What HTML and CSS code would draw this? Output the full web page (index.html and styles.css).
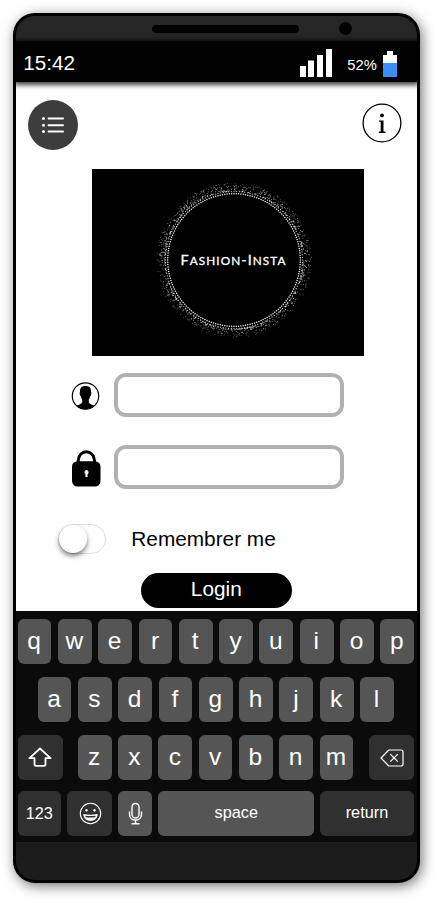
FILE: index.html
```html
<!DOCTYPE html>
<html lang="en">
<head>
<meta charset="utf-8">
<title>Fashion-Insta</title>
<link rel="stylesheet" href="styles.css">
</head>
<body>
<main class="phone">
  <div class="bezel-top"><span class="speaker"></span><span class="camera"></span></div>
  <header class="status">
    <span class="time">15:42</span>
    <svg class="signal" width="32" height="28" viewBox="0 0 32 28" fill="#fff"><path d="M0 17h6v11H0zM8 11.500h6V28H8zM17 6h6v22h-6zM26 0h6v28h-6z"/></svg>
    <span class="percent">52%</span>
    <svg class="battery" width="14" height="26" viewBox="0 0 14 26"><path fill="#fff" d="M4 0h6v4h4v8H0V4h4z"/><path fill="#3b8eff" d="M0 12h14v14H0z"/></svg>
  </header>
  <section class="screen">
    <div class="toolbar">
      <button class="menu" aria-label="Menu">
        <svg width="24" height="18" viewBox="0 0 24 18" fill="none" stroke="#fff" stroke-width="2" stroke-linecap="round"><path d="M7.500 2.500H22M7.500 9.200H22M7.500 15.600H22"/><path stroke-width="3" d="M2.500 2.500h.01M2.500 9.200h.01M2.500 15.600h.01"/></svg>
      </button>
      <svg class="info" width="40" height="40" viewBox="0 0 40 40"><circle cx="20" cy="20" r="18.900" fill="none" stroke="#000" stroke-width="1.300"/><circle cx="20" cy="12.400" r="1.900"/><path d="M17 17.400h4.500v11.200h2V30h-6.700v-1.400h1.900v-9.800H17z"/></svg>
    </div>
    <svg class="logo" width="272" height="187" viewBox="0 0 272 187">
      <rect width="272" height="187"/>
      <g id="dust" fill="#fff"></g>
      <text class="brand" x="88.500" y="96" textLength="106" lengthAdjust="spacingAndGlyphs">F<tspan class="small">ASHION</tspan>-I<tspan class="small">NSTA</tspan></text>
    </svg>
    <div class="field">
      <svg width="30" height="40" viewBox="0 0 30 40"><circle cx="14.500" cy="20" r="13.200" fill="#fff" stroke="#000" stroke-width="1.200"/><path d="M14.500 10c4 0 5.900 2 5.500 6.200l.5.400-.6 3.200-.7.400c-.4 1.800-1 2.700-1.400 3.500v2.500c.3 1.500 2.500 2.200 6.100 3.600C21.500 32 18 33.200 14.500 33.200S7.500 32 5.100 29.800c3.600-1.400 5.800-2.100 6.100-3.600v-2.500c-.4-.8-1-1.700-1.400-3.500l-.7-.4-.6-3.200.5-.4C8.600 12 10.500 10 14.500 10z"/></svg>
      <input class="box" type="text" aria-label="User">
    </div>
    <div class="field">
      <svg width="30" height="40" viewBox="0 0 30 40"><path d="M7.200 15v-2.500c.6-11.600 15.700-11.600 16.300 0V15" fill="none" stroke="#000" stroke-width="3"/><rect x="1" y="13.200" width="28.500" height="25.300" rx="5.500"/><path fill="#fff" d="M15.500 22.100a2.200 2.200 0 0 1 1 4.100l.1 2.700h-2.200l.1-2.700a2.200 2.200 0 0 1 1-4.100z"/></svg>
      <input class="box" type="password" aria-label="Password">
    </div>
    <div class="remember"><span class="toggle"><span class="knob"></span></span><span>Remembrer me</span></div>
    <button class="login">Login</button>
  </section>
  <section class="keyboard">
    <div class="row"><b>q</b><b>w</b><b>e</b><b>r</b><b>t</b><b>y</b><b>u</b><b>i</b><b>o</b><b>p</b></div>
    <div class="row second"><b>a</b><b>s</b><b>d</b><b>f</b><b>g</b><b>h</b><b>j</b><b>k</b><b>l</b></div>
    <div class="row third">
      <b class="dark shift"><svg width="24" height="22" viewBox="0 0 24 22" fill="none" stroke="#fff" stroke-width="1.800" stroke-linejoin="round"><path d="M12 1.500 22.500 11.200h-5v6q0 1.600-1.600 1.600H8.100q-1.600 0-1.600-1.600v-6h-5z"/></svg></b>
      <b>z</b><b>x</b><b>c</b><b>v</b><b>b</b><b>n</b><b>m</b>
      <b class="dark delete"><svg width="24" height="20" viewBox="0 0 24 20" fill="none" stroke="#fff" stroke-width="1.200" stroke-linejoin="round"><path d="M8.800 2H21q2 0 2 2v12q0 2-2 2H8.800L1 10zM10.300 6.200l7.500 7.500m0-7.500-7.500 7.500"/></svg></b>
    </div>
    <div class="row fourth">
      <b class="dark numbers">123</b>
      <b class="dark emoji"><svg width="24" height="24" viewBox="0 0 24 24"><circle cx="12.500" cy="11.500" r="10.200" fill="none" stroke="#fff" stroke-width="1.100"/><g fill="#fff"><ellipse cx="8.500" cy="8.300" rx="1.200" ry="1.400"/><ellipse cx="16.500" cy="8.300" rx="1.200" ry="1.400"/><path d="M5.300 12q7.200 1.400 14.400 0c-.2 9.300-14.200 9.300-14.400 0z"/></g><path d="M7.500 14.400q5 .8 10 0" fill="none" stroke="#303030" stroke-width="1.500"/></svg></b>
      <b class="mic"><svg width="16" height="24" viewBox="0 0 16 24" fill="none" stroke="#fff" stroke-width="1.400"><rect x="5" y="1.500" width="7" height="14.500" rx="3.500"/><path d="M2.500 9.500V12.500c0 7.500 12 7.500 12 0V9.500M8.500 18.300V21.500M4.500 21.700h8"/></svg></b>
      <b class="space">space</b>
      <b class="dark return">return</b>
    </div>
  </section>
  <footer class="bezel-bottom"></footer>
</main>
<script src="dust.js"></script>
</body>
</html>
```
FILE: styles.css
```css
* { box-sizing: border-box; }
html, body { margin: 0; background: #fff; overflow: hidden; }
body { width: 439px; height: 903px; padding: 13.300px 0 0 13.300px; font-family: "Liberation Sans", Arial, sans-serif; color: #000; }
button { border: 0; padding: 0; font: inherit; }
svg { display: block; flex: none; }
.phone { width: 406.300px; height: 870px; border: 3px solid #000; border-radius: 22px; background: #000; overflow: hidden; box-shadow: 2px 3px 13px rgba(0,0,0,.55); display: flex; flex-direction: column; }
.bezel-top { height: 25px; background: #262626; display: flex; align-items: center; flex: none; padding: 0 0 0 136px; }
.speaker { width: 147px; height: 8px; border-radius: 4px; background: #000; }
.camera { width: 13px; height: 13px; border-radius: 50%; background: #000; margin-left: 40px; }
.status { height: 41px; flex: none; background: #020202; color: #fff; display: flex; position: relative; z-index: 1; padding-left: 7px; box-shadow: 0 1px 5px 2px rgba(0,0,0,.75); }
.time { font-size: 20.700px; line-height: 24px; margin-top: 10px; width: 277px; }
.signal { margin-top: 8px; }
.percent { font-size: 14.700px; line-height: 18px; margin: 15px 0 0 15px; width: 35.500px; }
.battery { margin-top: 10px; }
.screen { height: 529px; flex: none; background: #fff; display: flex; flex-direction: column; align-items: flex-start; }
.toolbar { height: 86.500px; padding: 18px 15px 0 12px; display: flex; justify-content: space-between; width: 100%; flex: none; }
.menu { width: 50px; height: 50px; border-radius: 50%; background: #3d3d3d; display: grid; place-items: center; }
.info { margin-top: 3px; }
.logo { margin-left: 76px; }
.brand { font-family: "Lato", sans-serif; font-size: 13.500px; letter-spacing: 1px; fill: #fff; stroke: #fff; stroke-width: .3px; }
.small { font-size: 11px; }
.field { display: flex; margin: 17px 0 0 55px; height: 45px; }
.field + .field { margin-top: 27px; }
.field svg { margin-top: 3px; }
.box { width: 230px; height: 44.500px; margin-left: 13px; border: 4px solid #b2b2b2; border-radius: 12px; background: #fff; padding: 0 10px; outline: 0; }
.remember { display: flex; align-items: center; height: 30px; margin: 34.500px 0 0 42px; font-size: 20.800px; }
.toggle { width: 48px; height: 30px; border: 1px solid #ddd; border-radius: 15px; margin-right: 25px; }
.knob { display: block; width: 28px; height: 28px; border-radius: 50%; background: #fff; box-shadow: 0 3px 5px rgba(0,0,0,.5); }
.login { width: 151px; height: 35px; border-radius: 18px; background: #000; color: #fff; font-size: 20.800px; line-height: 24px; margin: 18.500px 0 0 124.500px; padding-bottom: 3px; flex: none; }
.keyboard { height: 231px; flex: none; background: #0b0b0b; padding: 8px 0 0 1.400px; }
.row { display: flex; gap: 6.500px; height: 45px; margin-bottom: 13px; }
.second { padding-left: 20px; }
.third { margin-bottom: 11px; }
.row b { width: 33.800px; height: 45px; flex: none; border-radius: 6px; background: #555; color: #fff; font-weight: 400; font-size: 24.500px; line-height: 43px; display: flex; justify-content: center; padding-right: 1px; }
.row svg { align-self: center; }
.row .dark { background: #303030; }
.row .shift { width: 45px; margin-right: 8.600px; padding-right: 0; }
.row .delete { width: 45px; margin-left: 9.200px; padding-right: 0; }
.fourth b { font-size: 16.300px; line-height: 43px; }
.row .numbers { width: 43.300px; padding-right: 0; line-height: 44px; }
.row .emoji { width: 44.200px; padding-right: 0; }
.row .mic { padding-right: 0; }
.row .space { width: 155.500px; padding-right: 0; }
.row .return { width: 94px; }
.bezel-bottom { flex: 1; background: #1c1c1c; }
```
FILE: dust.js
```js
// Stippled rings surrounded by a thinning halo of particles.
const group = document.getElementById('dust');
let seed = 7;
const rand = () => (seed = (seed * 16807) % 2147483647) / 2147483647;
function dot(radius, angle, size, opacity) {
  const c = document.createElementNS('http://www.w3.org/2000/svg', 'circle');
  c.setAttribute('cx', (142 + radius * Math.cos(angle)).toFixed(2));
  c.setAttribute('cy', (91 + radius * Math.sin(angle)).toFixed(2));
  c.setAttribute('r', size);
  c.setAttribute('opacity', opacity.toFixed(2));
  group.appendChild(c);
}
for (let i = 0; i < 180; i++) dot(66.3, i * Math.PI / 90, 0.75, 0.95);
for (let i = 0; i < 160; i++) dot(68.5, i * Math.PI / 80, 0.62, 0.8);
for (let i = 0; i < 900; i++) {
  const t = Math.pow(rand(), 1.7);
  dot(69 + t * 8.5, rand() * Math.PI * 2, 0.5, 0.75 - t * 0.45);
}
```
